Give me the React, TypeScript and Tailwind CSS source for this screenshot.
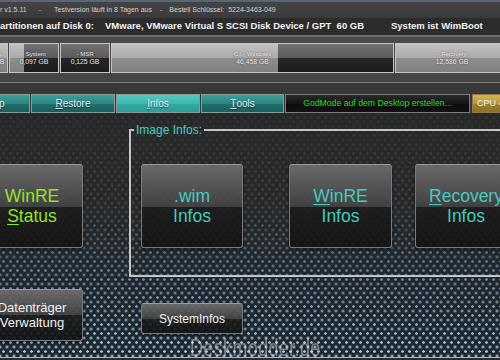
import clsx from "clsx";
import { ReactNode } from "react";

type Part = { label: string; value: string; width: number; used: number };

const parts: Part[] = [
  { label: "- WinRE", value: "0,498 GB", width: 36, used: 100 },
  { label: "- System", value: "0,097 GB", width: 50, used: 30 },
  { label: "- MSR", value: "0,125 GB", width: 50, used: 0 },
  { label: "C:\\ - Windows", value: "46,458 GB", width: 283, used: 59 },
  { label: "- Recovery", value: "12,586 GB", width: 114, used: 100 },
];

const tabs = [
  { label: "Backup", width: 84, active: false },
  { label: "Restore", width: 84, active: false },
  { label: "Infos", width: 84, active: true },
  { label: "Tools", width: 83, active: false },
];

const PartitionBlock = ({ part }: { part: Part }) => (
  <div
    className="grid shrink-0 h-[30px] border border-[#c4c4c4] bg-[linear-gradient(to_bottom,#727272,#5a5a5a_50%,#262626_51%,#1c1c1c)]"
    style={{ width: part.width }}
  >
    <div
      className="[grid-area:1/1] h-full bg-[linear-gradient(to_bottom,#c2c2c2,#a9a9a9_50%,#8e8e8e_51%,#7f7f7f)]"
      style={{ width: `${part.used}%` }}
    />
    <div className="[grid-area:1/1] flex flex-col items-center justify-center whitespace-nowrap text-[#ececec] leading-[8.5px] [text-shadow:0_0_2px_rgba(0,0,0,0.6)]">
      <span className="text-[6px]">{part.label}</span>
      <span className="text-[6.8px]">{part.value}</span>
    </div>
  </div>
);

const Tab = ({ label, width, active }: { label: string; width: number; active: boolean }) => (
  <div
    className={clsx(
      "shrink-0 h-[19px] flex items-center justify-center border border-[#8a9897] text-[10px] text-[#e4efee] [text-shadow:0_1px_1px_rgba(0,0,0,0.5)]",
      active
        ? "bg-[linear-gradient(to_bottom,#52c9c1,#3fb7af_50%,#33aaa2_51%,#2c9d96)]"
        : "bg-[linear-gradient(to_bottom,#3c9f9a,#2c8581_50%,#216f6b_51%,#1b5f5c)]"
    )}
    style={{ width }}
  >
    <span className="underline decoration-[0.5px] underline-offset-1">{label.slice(0, 1)}</span>
    <span>{label.slice(1)}</span>
  </div>
);

const GlassButton = ({ children, className }: { children: ReactNode; className?: string }) => (
  <div
    className={clsx(
      "shrink-0 rounded-[3px] border border-[#7a7a7a] border-t-[#9c9c9c] flex flex-col items-center justify-center text-center whitespace-nowrap",
      "bg-[linear-gradient(to_bottom,rgba(108,108,108,0.95),rgba(66,66,66,0.92)_51%,rgba(28,28,28,0.9)_51%,rgba(18,18,18,0.88))]",
      "shadow-[0_1px_3px_rgba(0,0,0,0.6)]",
      className
    )}
  >
    {children}
  </div>
);

const Key = ({ children }: { children: ReactNode }) => (
  <span className="underline decoration-1 underline-offset-2">{children}</span>
);

export default function App() {
  return (
    <div className="relative w-[500px] h-[360px] overflow-hidden bg-[#2a2a2a] font-['Liberation_Sans',Arial,sans-serif] flex flex-col">
      {/* info bar */}
      <div className="h-[18px] shrink-0 border-t-2 border-[#56657a] bg-[linear-gradient(to_bottom,#444,#3a3a3a)] flex items-center text-[7px] text-[#d4d4d4] whitespace-nowrap">
        <span>r v1.5.11</span>
        <span className="ml-[12px]">-</span>
        <span className="ml-[13px]">Testversion läuft in 8 Tagen aus</span>
        <span className="ml-[8px]">-</span>
        <span className="ml-[7px]">Bestell Schlüssel:</span>
        <span className="ml-[4px]">5224-3463-049</span>
      </div>

      {/* disk heading */}
      <div className="h-[17px] shrink-0 bg-[#2c2c2c] flex items-center text-[9.5px] font-bold text-[#f2f2f2] whitespace-nowrap">
        <span className="w-[105px] shrink-0">artitionen auf Disk 0:</span>
        <span className="w-[286px] shrink-0">VMware, VMware Virtual S SCSI Disk Device / GPT&nbsp;&nbsp;60 GB</span>
        <span>System ist WimBoot</span>
      </div>
      <div className="h-[2px] shrink-0 bg-[#6c6c6c]" />

      {/* partitions */}
      <div className="h-[45px] shrink-0 bg-[linear-gradient(to_bottom,#4b4b4b,#444)] pt-[6px]">
        <div className="flex gap-[1px] -ml-[28px]">
          {parts.map((p) => (
            <PartitionBlock key={p.label} part={p} />
          ))}
        </div>
      </div>
      <div className="h-[1px] shrink-0 bg-[#7e7e7e]" />

      {/* tabs */}
      <div className="h-[30px] shrink-0 bg-[#383838] pt-[11px]">
        <div className="flex gap-[1px] -ml-[54px]">
          {tabs.map((t) => (
            <Tab key={t.label} label={t.label} width={t.width} active={t.active} />
          ))}
          <div className="shrink-0 w-[185px] h-[19px] flex items-center justify-center border border-[#7a7a7a] bg-[linear-gradient(to_bottom,#2a2a2a,#151515_50%,#0c0c0c_51%,#111)] text-[8.7px] text-[#22dd22] whitespace-nowrap">
            GodMode auf dem Desktop erstellen...
          </div>
          <div className="shrink-0 w-[60px] h-[19px] ml-[1px] flex items-center pl-[4px] border border-[#8a7a4a] bg-[linear-gradient(to_bottom,#d6b54e,#b8953a_50%,#9d7e2e_51%,#8c7028)] text-[9px] text-[#eeeeee] whitespace-nowrap">
            CPU 4
          </div>
        </div>
      </div>

      {/* main */}
      <div className="h-[244px] shrink-0 pt-[10px] bg-[#1f282f] bg-[linear-gradient(to_bottom,rgba(40,40,40,0.94)_0%,rgba(40,40,40,0.8)_40%,rgba(32,38,44,0.4)_68%,rgba(30,38,44,0)_100%),radial-gradient(2px_1.3px_at_50%_50%,#a2c6e2_75%,transparent_100%),radial-gradient(2px_1.3px_at_50%_50%,#a2c6e2_75%,transparent_100%)] bg-[length:100%_100%,7px_9px,7px_9px] bg-[position:0_0,0_0,3.5px_4.5px]">
        <div className="flex -ml-[19px]">
          {/* left column */}
          <div className="w-[102px] shrink-0 flex flex-col">
            <GlassButton className="w-[102px] h-[84px] mt-[41px] text-[17.5px] leading-[20px] text-[#97e02c]">
              <span>WinRE</span>
              <span>
                <Key>S</Key>tatus
              </span>
            </GlassButton>
            <GlassButton className="w-[102px] h-[52px] mt-[41px] text-[13px] leading-[15px] text-[#f2f2f2]">
              <span>Datenträger</span>
              <span>Verwaltung</span>
            </GlassButton>
          </div>

          {/* image infos group */}
          <div className="ml-[46px] flex-1 min-w-0 flex flex-col">
            <div className="h-[14px] flex items-center">
              <div className="w-[5px] h-[2px] bg-[#c4c4c4]" />
              <span className="px-[2px] text-[12px] text-[#4ccbc2] whitespace-nowrap">Image Infos:</span>
              <div className="flex-1 h-[2px] bg-[#c4c4c4]" />
            </div>
            <div className="-mt-[7px] border-l-2 border-b-2 border-[#c4c4c4] pt-[34px] pb-[27px] pl-[10px] flex">
              <GlassButton className="w-[102px] h-[84px] text-[17.5px] leading-[20px] text-[#48c9c0]">
                <span>.wim</span>
                <span>Infos</span>
              </GlassButton>
              <GlassButton className="w-[103px] h-[84px] ml-[46px] text-[17.5px] leading-[20px] text-[#48c9c0]">
                <span>
                  <Key>W</Key>inRE
                </span>
                <span>Infos</span>
              </GlassButton>
              <GlassButton className="w-[102px] h-[84px] ml-[23px] text-[17.5px] leading-[20px] text-[#48c9c0]">
                <span>
                  <Key>R</Key>ecovery
                </span>
                <span>Infos</span>
              </GlassButton>
            </div>
            <GlassButton className="w-[102px] h-[31px] mt-[26px] ml-[12px] text-[12px] text-[#f2f2f2]">
              SystemInfos
            </GlassButton>
          </div>
        </div>
      </div>
      <div className="h-[1px] shrink-0 bg-[#b4b4b4]" />
      <div className="flex-1 bg-[#2b2b2b]" />

      {/* watermark */}
      <div className="absolute left-[190px] top-[336px] text-[23px] leading-[24px] text-white/20 scale-x-[0.78] origin-left tracking-[0.5px] whitespace-nowrap [text-shadow:0_0_1px_rgba(255,255,255,0.3)]">
        Deskmodder.de
      </div>
    </div>
  );
}
